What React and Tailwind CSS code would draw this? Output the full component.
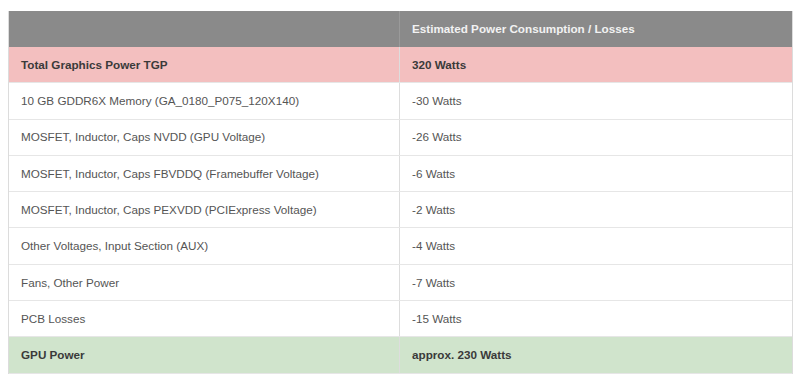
import React from 'react';

const rows = [
  { label: 'Total Graphics Power TGP', value: '320 Watts', tone: 'pink' },
  { label: '10 GB GDDR6X Memory (GA_0180_P075_120X140)', value: '-30 Watts' },
  { label: 'MOSFET, Inductor, Caps NVDD (GPU Voltage)', value: '-26 Watts' },
  { label: 'MOSFET, Inductor, Caps FBVDDQ (Framebuffer Voltage)', value: '-6 Watts' },
  { label: 'MOSFET, Inductor, Caps PEXVDD (PCIExpress Voltage)', value: '-2 Watts' },
  { label: 'Other Voltages, Input Section (AUX)', value: '-4 Watts' },
  { label: 'Fans, Other Power', value: '-7 Watts' },
  { label: 'PCB Losses', value: '-15 Watts' },
  { label: 'GPU Power', value: 'approx. 230 Watts', tone: 'green' },
];

export default function App() {
  return (
    <div className="w-[800px] h-[383px] bg-white pt-[11px] pl-[8px] font-['Liberation_Sans',Arial,sans-serif] text-[11.7px]">
      <div className="w-[785px] border-x border-[#dcdcdc]">
        <div className="flex h-[36px] bg-[#8a8a8a] text-[#f2f2f2] font-bold">
          <div className="w-[391px] border-r border-[#9a9a9a]" />
          <div className="flex-1 flex items-center pl-[12px]">Estimated Power Consumption / Losses</div>
        </div>
        {rows.map((r, i) => {
          const bg = r.tone === 'pink' ? 'bg-[#f3bfbf] text-[#3a3a3a] font-bold' : r.tone === 'green' ? 'bg-[#d0e4cc] text-[#3a3a3a] font-bold' : 'bg-white text-[#555]';
          return (
            <div key={i} className={`flex h-[36.3px] border-b border-[#e6e6e6] ${bg}`}>
              <div className="w-[391px] flex items-center pl-[12px] border-r border-[#dddddd]">{r.label}</div>
              <div className="flex-1 flex items-center pl-[12px]">{r.value}</div>
            </div>
          );
        })}
      </div>
    </div>
  );
}
